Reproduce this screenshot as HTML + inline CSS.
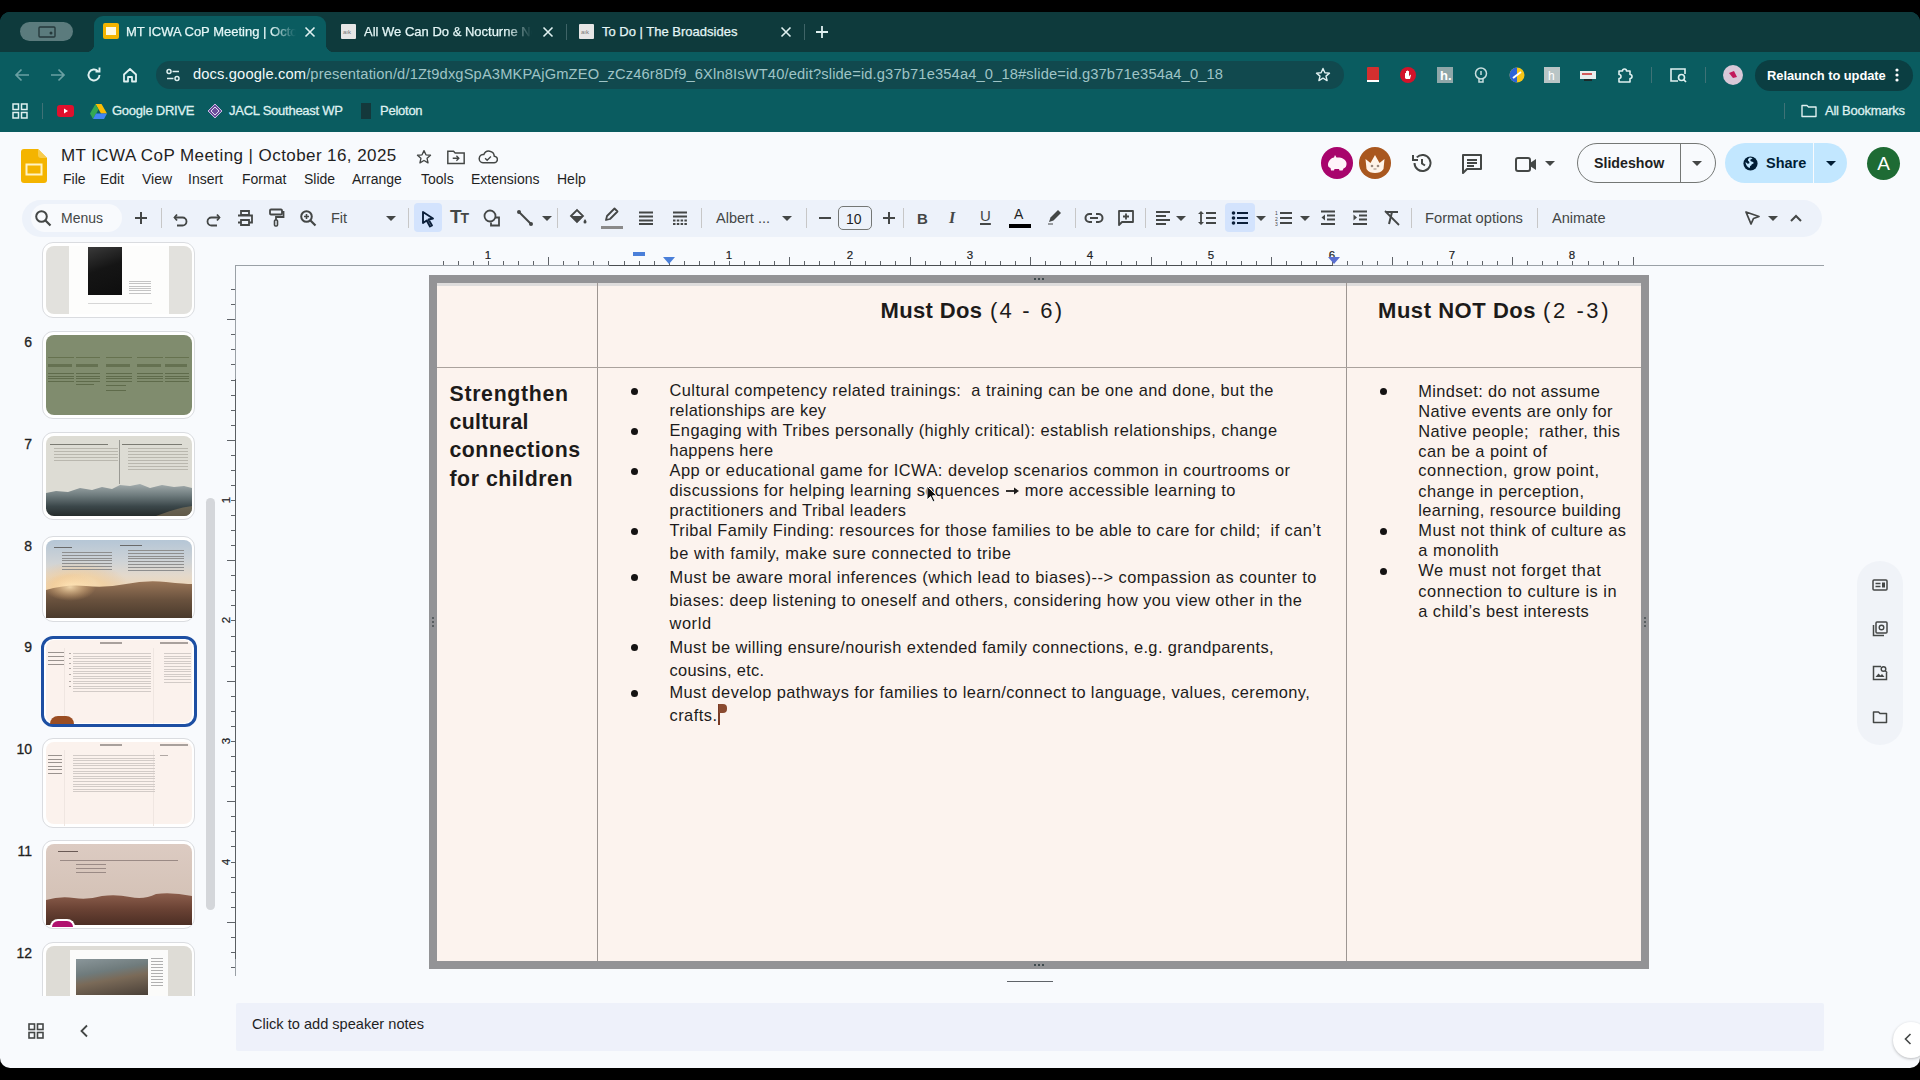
<!DOCTYPE html>
<html><head><meta charset="utf-8">
<style>
*{box-sizing:border-box;margin:0;padding:0}
html,body{width:1920px;height:1080px;overflow:hidden;background:#000;font-family:"Liberation Sans",sans-serif}
.a{position:absolute}
#chrome{position:absolute;left:0;top:12px;width:1920px;height:120px;background:#0f5a60;border-radius:10px 10px 0 0;overflow:hidden}
#tabstrip{position:absolute;left:0;top:0;width:1920px;height:40px;background:#0c3d41}
.tab{position:absolute;top:4px;height:36px;color:#e6f2f2;font-size:13px}
.tabtitle{position:absolute;top:12px;white-space:nowrap;overflow:hidden}
.fav{position:absolute;top:12px;width:16px;height:16px}
.x{position:absolute;top:8px;font-size:16px;color:#dfeeee}
#app{position:absolute;left:0;top:132px;width:1920px;height:936px;background:#f8fafd;border-radius:0 0 10px 10px;overflow:hidden}
.menu{position:absolute;top:39px;font-size:14px;color:#1f1f1f}
.ic{position:absolute}
svg{display:block}
.sl{white-space:nowrap;color:#1d1b1a}
</style></head><body>
<div id="chrome">
<div class="a" style="left:0px;top:0px;width:1920px;height:40px;background:#0e3a3c"></div>
<div class="a" style="left:94px;top:4px;width:232px;height:40px;background:#0a5c60;border-radius:9px 9px 0 0"></div>
<div class="a" style="left:86px;top:32px;width:8px;height:8px;background:radial-gradient(circle at 0 0,#0e3a3c 8px,#0a5c60 8.5px)"></div>
<div class="a" style="left:326px;top:32px;width:8px;height:8px;background:radial-gradient(circle at 100% 0,#0e3a3c 8px,#0a5c60 8.5px)"></div>
<div class="a" style="left:20px;top:10px;width:53px;height:19px;background:#5b7b7d;border-radius:10px"></div>
<svg class="a" style="left:38.0px;top:14.0px" width="18" height="12" viewBox="0 0 18 12"><rect x="1" y="1" width="16" height="10" rx="1" fill="none" stroke="#26393b" stroke-width="1.4"/><circle cx="13" cy="7" r="1.5" fill="#26393b"/></svg>
<svg class="a" style="left:103.0px;top:11.0px" width="16" height="16" viewBox="0 0 16 16"><rect x="0" y="0" width="16" height="16" rx="2" fill="#f4b400"/><rect x="3" y="4" width="10" height="8" fill="#fff8e0"/></svg>
<div class="a" style="left:126px;top:12px;white-space:nowrap;font-size:13px;color:#e4f6f6;-webkit-text-stroke:0.25px #e4f6f6;width:170px;overflow:hidden;-webkit-mask-image:linear-gradient(90deg,#000 85%,transparent)">MT ICWA CoP Meeting | October</div>
<svg class="a" style="left:304.0px;top:14.0px" width="12" height="12" viewBox="0 0 12 12"><path d="M1.5 1.5l9 9M10.5 1.5l-9 9" stroke="#dff0f0" stroke-width="1.6"/></svg>
<svg class="a" style="left:340.5px;top:11.5px" width="15" height="15" viewBox="0 0 15 15"><rect width="15" height="15" rx="1" fill="#e6e6e6"/><text x="2" y="10" font-size="6" fill="#777">aık</text></svg>
<div class="a" style="left:364px;top:12px;white-space:nowrap;font-size:13px;color:#e4f6f6;-webkit-text-stroke:0.25px #e4f6f6;width:168px;overflow:hidden;-webkit-mask-image:linear-gradient(90deg,#000 85%,transparent)">All We Can Do &amp; Nocturne Notes</div>
<svg class="a" style="left:542.0px;top:14.0px" width="12" height="12" viewBox="0 0 12 12"><path d="M1.5 1.5l9 9M10.5 1.5l-9 9" stroke="#dff0f0" stroke-width="1.6"/></svg>
<div class="a" style="left:566px;top:12px;width:1px;height:16px;background:#3f6467"></div>
<svg class="a" style="left:578.5px;top:11.5px" width="15" height="15" viewBox="0 0 15 15"><rect width="15" height="15" rx="1" fill="#e6e6e6"/><text x="2" y="10" font-size="6" fill="#777">aık</text></svg>
<div class="a" style="left:602px;top:12px;white-space:nowrap;font-size:13px;color:#e4f6f6;-webkit-text-stroke:0.25px #e4f6f6">To Do | The Broadsides</div>
<svg class="a" style="left:780.0px;top:14.0px" width="12" height="12" viewBox="0 0 12 12"><path d="M1.5 1.5l9 9M10.5 1.5l-9 9" stroke="#dff0f0" stroke-width="1.6"/></svg>
<div class="a" style="left:804px;top:12px;width:1px;height:16px;background:#3f6467"></div>
<svg class="a" style="left:815.0px;top:13.0px" width="14" height="14" viewBox="0 0 14 14"><path d="M7 1v12M1 7h12" stroke="#dff0f0" stroke-width="1.8"/></svg>
<div class="a" style="left:0px;top:40px;width:1920px;height:80px;background:#0a5c60"></div>
<svg class="a" style="left:14.0px;top:56.0px" width="16" height="14" viewBox="0 0 16 14"><path d="M15 7H2M7.5 1.5L2 7l5.5 5.5" fill="none" stroke="#6aa0a3" stroke-width="1.7"/></svg>
<svg class="a" style="left:50.0px;top:56.0px" width="16" height="14" viewBox="0 0 16 14"><path d="M1 7h13M8.5 1.5L14 7l-5.5 5.5" fill="none" stroke="#6aa0a3" stroke-width="1.7"/></svg>
<svg class="a" style="left:86.0px;top:55.0px" width="16" height="16" viewBox="0 0 16 16"><path d="M13.5 8a5.5 5.5 0 1 1-1.6-3.9" fill="none" stroke="#dff0f0" stroke-width="1.9"/><path d="M9.5 4.5h4v-4" fill="none" stroke="#dff0f0" stroke-width="1.9"/></svg>
<svg class="a" style="left:122.0px;top:55.0px" width="16" height="16" viewBox="0 0 16 16"><path d="M2 7.5L8 2l6 5.5V14.5h-4v-4.5H6v4.5H2z" fill="none" stroke="#dff0f0" stroke-width="1.8" stroke-linejoin="round"/></svg>
<div class="a" style="left:156px;top:49px;width:1188px;height:28px;background:#11494e;border-radius:14px"></div>
<svg class="a" style="left:165.0px;top:56.0px" width="16" height="14" viewBox="0 0 16 14"><circle cx="4" cy="3.5" r="2" fill="none" stroke="#dff0f0" stroke-width="1.5"/><path d="M7.5 3.5h6.5M2 10.5h6.5" stroke="#dff0f0" stroke-width="1.6"/><circle cx="12" cy="10.5" r="2" fill="none" stroke="#dff0f0" stroke-width="1.5"/></svg>
<div class="a" style="left:193px;top:54px;white-space:nowrap;font-size:14.7px;color:#f2fafa;letter-spacing:0.14px;top:54px">docs.google.com<span style="color:#9fc4c6;font-weight:normal">/presentation/d/1Zt9dxgSpA3MKPAjGmZEO_zCz46r8Df9_6Xln8IsWT40/edit?slide=id.g37b71e354a4_0_18#slide=id.g37b71e354a4_0_18</span></div>
<svg class="a" style="left:1315.0px;top:55.0px" width="16" height="16" viewBox="0 0 16 16"><path d="M8 1.5l1.9 4.2 4.6.4-3.5 3 1.1 4.5L8 11.2l-4.1 2.4 1.1-4.5-3.5-3 4.6-.4z" fill="none" stroke="#dff0f0" stroke-width="1.4" stroke-linejoin="round"/></svg>
<svg class="a" style="left:1366.0px;top:55.0px" width="14" height="16" viewBox="0 0 14 16"><rect x="1" y="0" width="12" height="14" rx="1" fill="#d32f2f"/><rect x="1" y="13" width="12" height="2" fill="#fff"/></svg>
<svg class="a" style="left:1400.0px;top:55.0px" width="16" height="16" viewBox="0 0 16 16"><circle cx="8" cy="8" r="8" fill="#d3132a"/><path d="M5 11V6.5c0-.6 1-.6 1 0V9V4.5c0-.6 1-.6 1 0V8V4c0-.6 1-.6 1 0v4V4.5c0-.6 1-.6 1 0v5l1-1.5c.4-.5 1.2 0 .9.5L10 12H6z" fill="#fff"/></svg>
<svg class="a" style="left:1437.0px;top:55.0px" width="16" height="16" viewBox="0 0 16 16"><rect width="16" height="16" fill="#8fa7a9"/><text x="3" y="13" font-size="13" font-weight="bold" fill="#fff" font-family="Liberation Sans">h.</text></svg>
<svg class="a" style="left:1474.0px;top:54.5px" width="14" height="17" viewBox="0 0 14 17"><circle cx="7" cy="6.5" r="5.5" fill="none" stroke="#c9dede" stroke-width="1.5"/><path d="M5 12v3h4v-3" fill="none" stroke="#c9dede" stroke-width="1.5"/><path d="M7 4v4" stroke="#c9dede" stroke-width="1.5"/></svg>
<svg class="a" style="left:1509.0px;top:55.0px" width="16" height="16" viewBox="0 0 16 16"><circle cx="8" cy="8" r="7.5" fill="#f5c518"/><path d="M8 .5A7.5 7.5 0 0 0 8 15.5z" fill="#2b63d9"/><path d="M4 11l8-6" stroke="#fff" stroke-width="2"/></svg>
<svg class="a" style="left:1544.0px;top:55.0px" width="16" height="16" viewBox="0 0 16 16"><rect width="16" height="16" fill="#b9c5c6"/><text x="4" y="13" font-size="12" fill="#fff" font-family="Liberation Sans">h</text></svg>
<svg class="a" style="left:1580.0px;top:56.0px" width="16" height="14" viewBox="0 0 16 14"><rect x="0" y="3" width="16" height="8" fill="#e8eeee"/><rect x="2" y="5" width="10" height="2" fill="#d35c5c"/><rect x="4" y="11" width="8" height="2" fill="#1a2a2a"/></svg>
<svg class="a" style="left:1617.0px;top:55.0px" width="16" height="16" viewBox="0 0 16 16"><path d="M2 4h3.5a2 2 0 0 1 4 0H13v3.5a2 2 0 0 1 0 4V15H2V11.5a2 2 0 0 0 0-4z" fill="none" stroke="#dff0f0" stroke-width="1.6" stroke-linejoin="round"/></svg>
<div class="a" style="left:1651px;top:55px;width:1px;height:16px;background:#3f7276"></div>
<svg class="a" style="left:1669.0px;top:55.0px" width="18" height="16" viewBox="0 0 18 16"><path d="M9 14H2V2h14v5" fill="none" stroke="#dff0f0" stroke-width="1.6"/><circle cx="12.5" cy="10.5" r="3" fill="none" stroke="#dff0f0" stroke-width="1.6"/><path d="M14.5 12.5l2.5 2.5" stroke="#dff0f0" stroke-width="1.7"/></svg>
<div class="a" style="left:1705px;top:55px;width:1px;height:16px;background:#3f7276"></div>
<svg class="a" style="left:1723.0px;top:53.0px" width="20" height="20" viewBox="0 0 20 20"><circle cx="10" cy="10" r="10" fill="#d8c8d8"/><path d="M6 8l5-2 3 6-4 1z" fill="#c2185b"/></svg>
<div class="a" style="left:1755px;top:48px;width:158px;height:31px;background:#0b3e42;border-radius:16px"></div>
<div class="a" style="left:1767px;top:56px;white-space:nowrap;font-size:12.9px;color:#ffffff;font-weight:bold;letter-spacing:-0.05px">Relaunch to update</div>
<svg class="a" style="left:1895.0px;top:56.0px" width="4" height="14" viewBox="0 0 4 14"><circle cx="2" cy="2" r="1.6" fill="#fff"/><circle cx="2" cy="7" r="1.6" fill="#fff"/><circle cx="2" cy="12" r="1.6" fill="#fff"/></svg>
<svg class="a" style="left:12.0px;top:91.0px" width="16" height="16" viewBox="0 0 16 16"><rect x="1" y="1" width="5.5" height="5.5" fill="none" stroke="#dff0f0" stroke-width="1.5"/><rect x="9.5" y="1" width="5.5" height="5.5" fill="none" stroke="#dff0f0" stroke-width="1.5"/><rect x="1" y="9.5" width="5.5" height="5.5" fill="none" stroke="#dff0f0" stroke-width="1.5"/><rect x="9.5" y="9.5" width="5.5" height="5.5" fill="none" stroke="#dff0f0" stroke-width="1.5"/></svg>
<div class="a" style="left:42px;top:91px;width:1px;height:16px;background:#3f7276"></div>
<svg class="a" style="left:56.5px;top:93.0px" width="17" height="12" viewBox="0 0 17 12"><rect width="17" height="12" rx="3" fill="#e0102d"/><path d="M7 3.5v5l4-2.5z" fill="#fff"/></svg>
<svg class="a" style="left:89.5px;top:91.5px" width="17" height="15" viewBox="0 0 17 15"><path d="M5.5 0h6l5.5 9.5h-6z" fill="#fbbc04"/><path d="M5.5 0L0 9.5l3 5.5 5.5-9.5z" fill="#34a853"/><path d="M3 15h11l3-5.5H6z" fill="#4285f4"/></svg>
<div class="a" style="left:112px;top:91px;white-space:nowrap;font-size:13px;color:#dff0f0;letter-spacing:-0.25px;-webkit-text-stroke:0.3px #dff0f0">Google DRIVE</div>
<svg class="a" style="left:207.0px;top:91.0px" width="16" height="16" viewBox="0 0 16 16"><path d="M8 1l7 7-7 7-7-7z" fill="#6b4f9a" stroke="#c7b8e0" stroke-width="1"/><path d="M8 4l4 4-4 4-4-4z" fill="none" stroke="#e0d8f0" stroke-width="1"/></svg>
<div class="a" style="left:229px;top:91px;white-space:nowrap;font-size:13px;color:#dff0f0;letter-spacing:-0.25px;-webkit-text-stroke:0.3px #dff0f0">JACL Southeast WP</div>
<svg class="a" style="left:361.0px;top:91.0px" width="10" height="16" viewBox="0 0 10 16"><rect width="10" height="16" fill="#14383b"/></svg>
<div class="a" style="left:380px;top:91px;white-space:nowrap;font-size:13px;color:#dff0f0;letter-spacing:-0.25px;-webkit-text-stroke:0.3px #dff0f0">Peloton</div>
<div class="a" style="left:1784px;top:91px;width:1px;height:16px;background:#3f7276"></div>
<svg class="a" style="left:1801.0px;top:92.0px" width="16" height="14" viewBox="0 0 16 14"><path d="M1 1.5h5l1.5 1.5H15v9.5H1z" fill="none" stroke="#dff0f0" stroke-width="1.4" stroke-linejoin="round"/></svg>
<div class="a" style="left:1825px;top:91px;white-space:nowrap;font-size:13px;color:#dff0f0;letter-spacing:-0.25px;-webkit-text-stroke:0.3px #dff0f0">All Bookmarks</div>
</div>

<div id="app">
  <!-- header -->
  <svg class="a" style="left:21px;top:17px" width="26" height="34" viewBox="0 0 26 34">
    <path d="M3 0H17L26 9V31A3 3 0 0 1 23 34H3A3 3 0 0 1 0 31V3A3 3 0 0 1 3 0Z" fill="#f4b400"/>
    <path d="M17 0L26 9H20A3 3 0 0 1 17 6Z" fill="#f7cb4d"/>
    <rect x="5.5" y="15.5" width="15" height="10" fill="none" stroke="#fff3c4" stroke-width="2"/>
  </svg>
  <div class="a" style="left:61px;top:14px;font-size:17px;letter-spacing:0.42px;color:#1f1f1f;white-space:nowrap">MT ICWA CoP Meeting | October 16, 2025</div>
  <svg class="a" style="left:415px;top:16px" width="18" height="18" viewBox="0 0 24 24"><path d="M12 3.5l2.6 5.6 6.1.6-4.6 4.1 1.3 6-5.4-3.1-5.4 3.1 1.3-6-4.6-4.1 6.1-.6z" fill="none" stroke="#444746" stroke-width="1.8" stroke-linejoin="round"/></svg>
  <svg class="a" style="left:446px;top:16px" width="20" height="18" viewBox="0 0 24 22"><path d="M2 4h7l2 2h11v13H2z" fill="none" stroke="#444746" stroke-width="1.8"/><path d="M8 12.5h7M12.5 9.5l3 3-3 3" fill="none" stroke="#444746" stroke-width="1.6"/></svg>
  <svg class="a" style="left:478px;top:17px" width="20" height="16" viewBox="0 0 24 18"><path d="M6 16h13a4 4 0 0 0 .5-8A6.5 6.5 0 0 0 7 6a5 5 0 0 0-1 10z" fill="none" stroke="#444746" stroke-width="1.8"/><path d="M8.5 10.5l2.5 2.5 4.5-4.5" fill="none" stroke="#444746" stroke-width="1.6"/></svg>
  <div class="menu" style="left:63px">File</div>
  <div class="menu" style="left:100px">Edit</div>
  <div class="menu" style="left:142px">View</div>
  <div class="menu" style="left:188px">Insert</div>
  <div class="menu" style="left:242px">Format</div>
  <div class="menu" style="left:304px">Slide</div>
  <div class="menu" style="left:352px">Arrange</div>
  <div class="menu" style="left:421px">Tools</div>
  <div class="menu" style="left:471px">Extensions</div>
  <div class="menu" style="left:557px">Help</div>

  <!-- header right -->
  <div class="a" style="left:1321px;top:15px;width:32px;height:32px;border-radius:50%;background:#a8046c"></div>
  <svg class="a" style="left:1325px;top:22px" width="24" height="18" viewBox="0 0 24 18"><path d="M3 11c0-4 3-7 6-7.5L10 1l1.5 2.5C16 3 21 5 21.5 9c.3 3-1 5-3 5.5l-1 2h-3l-.5-1.5H9.5L9 16.5H6L5.5 14C4 13.5 3 12.5 3 11z" fill="#fff3fa"/></svg>
  <div class="a" style="left:1359px;top:15px;width:32px;height:32px;border-radius:50%;background:#a9571f"></div>
  <svg class="a" style="left:1363px;top:19px" width="24" height="24" viewBox="0 0 24 24"><path d="M2.5 8l5 4 4.5-8 4.5 8 5-4-1 10c-2 3-5 4-8.5 4s-6.5-1-8.5-4z" fill="#fff4ea"/><circle cx="9" cy="15" r="1.3" fill="#9a8a80"/><circle cx="15" cy="15" r="1.3" fill="#9a8a80"/><path d="M10.5 18h3" stroke="#9a8a80" stroke-width="1"/></svg>
  <svg class="a" style="left:1410px;top:19px" width="24" height="24" viewBox="0 0 24 24"><path d="M4.5 12a8 8 0 1 0 2.3-5.6" fill="none" stroke="#444746" stroke-width="2"/><path d="M3 4v5h5" fill="none" stroke="#444746" stroke-width="2"/><path d="M12 8v4.5l3 2" fill="none" stroke="#444746" stroke-width="2"/></svg>
  <svg class="a" style="left:1460px;top:20px" width="24" height="24" viewBox="0 0 24 24"><path d="M3 3h18v14H7l-4 4z" fill="none" stroke="#444746" stroke-width="2" stroke-linejoin="round"/><path d="M7 8h10M7 11h10M7 14h7" stroke="#444746" stroke-width="1.8"/></svg>
  <svg class="a" style="left:1514px;top:22px" width="24" height="20" viewBox="0 0 24 20"><rect x="2" y="4" width="14" height="13" rx="2" fill="none" stroke="#444746" stroke-width="2"/><path d="M16 9l6-4v11l-6-4z" fill="#444746"/></svg>
  <div class="a" style="left:1545px;top:29px;border-left:5px solid transparent;border-right:5px solid transparent;border-top:5px solid #444746"></div>
  <div class="a" style="left:1577px;top:11px;width:139px;height:40px;border:1px solid #747775;border-radius:20px"></div>
  <div class="a" style="left:1680px;top:12px;width:1px;height:38px;background:#747775"></div>
  <div class="a" style="left:1594px;top:23px;font-size:14.2px;font-weight:bold;color:#1f1f1f">Slideshow</div>
  <div class="a" style="left:1692px;top:29px;border-left:5px solid transparent;border-right:5px solid transparent;border-top:5px solid #444746"></div>
  <div class="a" style="left:1725px;top:11px;width:122px;height:40px;border-radius:20px;background:#c2e7ff"></div>
  <div class="a" style="left:1813px;top:11px;width:1px;height:40px;background:#f8fafd"></div>
  <svg class="a" style="left:1742px;top:23px" width="17" height="17" viewBox="0 0 24 24"><circle cx="12" cy="12" r="10" fill="#001d35"/><path d="M11 3.5c-2 1-3 3-2.5 4.5 1 .5 2 1.5 2 3s-2 1.5-3 1l-2.5-2c0 4 2.5 7.5 6 8.5l.5-3c1 0 2-1 2-2l3-2c0-1.5-1.5-2-3-2.5-1.5 0-2-1-1.5-2.5 1-1 2-1 3-1.5-1-1-2.5-1.5-4-1.5z" fill="#c2e7ff"/></svg>
  <div class="a" style="left:1766px;top:23px;font-size:14.5px;font-weight:bold;color:#001d35">Share</div>
  <div class="a" style="left:1826px;top:29px;border-left:5px solid transparent;border-right:5px solid transparent;border-top:5px solid #001d35"></div>
  <div class="a" style="left:1867px;top:15px;width:33px;height:33px;border-radius:50%;background:#1e6b34;color:#fff;font-size:19px;text-align:center;line-height:33px">A</div>

  <!-- toolbar pill -->
  <div class="a" style="left:22px;top:68px;width:1800px;height:37px;border-radius:19px;background:#edf2fa"></div>
  <div id="tb"><div class="a" style="left:31px;top:72px;width:91px;height:28px;background:#f8fafd;border-radius:14px"></div>
<svg class="a" style="left:34.0px;top:77.0px" width="18" height="18" viewBox="0 0 18 18"><circle cx="7.5" cy="7.5" r="5.3" fill="none" stroke="#444746" stroke-width="2"/><path d="M11.5 11.5L16.5 16.5" stroke="#444746" stroke-width="2.2"/></svg>
<div class="a" style="left:61px;top:78px;white-space:nowrap;font-size:14px;color:#444746">Menus</div>
<svg class="a" style="left:134.0px;top:79.0px" width="14" height="14" viewBox="0 0 14 14"><path d="M7 1v12M1 7h12" stroke="#444746" stroke-width="2"/></svg>
<div class="a" style="left:161px;top:76px;width:1px;height:20px;background:#c7c7c7"></div>
<svg class="a" style="left:172.0px;top:78.0px" width="18" height="18" viewBox="0 0 18 18"><path d="M5 4.5L2.5 7.5 5 10.5" fill="none" stroke="#444746" stroke-width="1.8"/><path d="M3 7.5h7.5a4 4 0 0 1 0 8H5" fill="none" stroke="#444746" stroke-width="1.8"/></svg>
<svg class="a" style="left:204.0px;top:78.0px" width="18" height="18" viewBox="0 0 18 18"><path d="M13 4.5L15.5 7.5 13 10.5" fill="none" stroke="#444746" stroke-width="1.8"/><path d="M15 7.5H7.5a4 4 0 0 0 0 8H13" fill="none" stroke="#444746" stroke-width="1.8"/></svg>
<svg class="a" style="left:236.0px;top:77.0px" width="18" height="18" viewBox="0 0 18 18"><path d="M5 2h8v4H5z" fill="none" stroke="#444746" stroke-width="1.8"/><path d="M2 6.5h14v7h-3M5 13.5H2z" fill="none" stroke="#444746" stroke-width="1.8"/><path d="M5 11h8v5H5z" fill="none" stroke="#444746" stroke-width="1.8"/></svg>
<svg class="a" style="left:267.0px;top:76.0px" width="18" height="20" viewBox="0 0 18 20"><rect x="3" y="1.5" width="12" height="5" rx="1" fill="none" stroke="#444746" stroke-width="1.8"/><path d="M15 4h1.5v5H9v3" fill="none" stroke="#444746" stroke-width="1.8"/><rect x="7.5" y="12" width="3" height="6" rx="1" fill="none" stroke="#444746" stroke-width="1.6"/></svg>
<svg class="a" style="left:299.0px;top:77.0px" width="18" height="18" viewBox="0 0 18 18"><circle cx="7.5" cy="7.5" r="5.3" fill="none" stroke="#444746" stroke-width="2"/><path d="M11.5 11.5L16.5 16.5" stroke="#444746" stroke-width="2.2"/><path d="M7.5 5v5M5 7.5h5" stroke="#444746" stroke-width="1.6"/></svg>
<div class="a" style="left:331px;top:78px;white-space:nowrap;font-size:14.5px;color:#444746">Fit</div>
<div class="a" style="left:386px;top:84px;border-left:5px solid transparent;border-right:5px solid transparent;border-top:5px solid #444746"></div>
<div class="a" style="left:408px;top:76px;width:1px;height:20px;background:#c7c7c7"></div>
<div class="a" style="left:414px;top:71px;width:28px;height:29px;background:#d3e3fd;border-radius:4px"></div>
<svg class="a" style="left:420.0px;top:78.0px" width="16" height="18" viewBox="0 0 16 18"><path d="M3 2l10 6.5-4.5 1L12 15.5l-2 1-3.3-6L3 13z" fill="none" stroke="#0b1f3a" stroke-width="1.9" stroke-linejoin="round"/></svg>
<div class="a" style="left:450px;top:75px;white-space:nowrap;color:#444746;font-weight:bold;line-height:20px"><span style="font-size:19px;font-weight:bold;letter-spacing:-1px">T</span><span style="font-size:14px;font-weight:bold">T</span></div>
<svg class="a" style="left:482.0px;top:76.0px" width="20" height="20" viewBox="0 0 20 20"><circle cx="8" cy="8" r="5.5" fill="none" stroke="#444746" stroke-width="1.8"/><path d="M13 9.5h4v8h-8v-3" fill="none" stroke="#444746" stroke-width="1.8"/></svg>
<svg class="a" style="left:516.0px;top:77.0px" width="18" height="18" viewBox="0 0 18 18"><path d="M3 3l12 12" stroke="#444746" stroke-width="2"/><circle cx="3" cy="3" r="2" fill="#444746"/><circle cx="15" cy="15" r="2" fill="#444746"/></svg>
<div class="a" style="left:542px;top:84px;border-left:5px solid transparent;border-right:5px solid transparent;border-top:5px solid #444746"></div>
<div class="a" style="left:557px;top:76px;width:1px;height:20px;background:#c7c7c7"></div>
<svg class="a" style="left:568.0px;top:76.0px" width="20" height="18" viewBox="0 0 20 18"><path d="M3 8l6-6 6 6-6 6z" fill="none" stroke="#444746" stroke-width="1.8"/><path d="M3 8h12l-6 6z" fill="#444746"/><path d="M17 11c1 1.5 1.5 2.3 1.5 3a1.5 1.5 0 0 1-3 0c0-.7.5-1.5 1.5-3z" fill="#444746"/></svg>
<svg class="a" style="left:603.0px;top:75.0px" width="18" height="16" viewBox="0 0 18 16"><path d="M3 13l1-4 7.5-7.5 3 3L7 12z" fill="none" stroke="#444746" stroke-width="1.8" stroke-linejoin="round"/></svg>
<div class="a" style="left:601px;top:94px;width:22px;height:3px;background:#8a8a8a"></div>
<svg class="a" style="left:637.0px;top:78.0px" width="18" height="16" viewBox="0 0 18 16"><path d="M2 2.5h14M2 6.5h14M2 10.5h14M2 14h14" stroke="#444746" stroke-width="2.2"/></svg>
<svg class="a" style="left:671.0px;top:78.0px" width="18" height="16" viewBox="0 0 18 16"><path d="M2 2.5h14M2 6.5h14" stroke="#444746" stroke-width="2.2"/><path d="M2 10.5h14M2 14h14" stroke="#444746" stroke-width="1.8" stroke-dasharray="2.5 1.3"/></svg>
<div class="a" style="left:701px;top:76px;width:1px;height:20px;background:#c7c7c7"></div>
<div class="a" style="left:716px;top:78px;white-space:nowrap;font-size:14.5px;color:#444746">Albert ...</div>
<div class="a" style="left:782px;top:84px;border-left:5px solid transparent;border-right:5px solid transparent;border-top:5px solid #444746"></div>
<div class="a" style="left:806px;top:76px;width:1px;height:20px;background:#c7c7c7"></div>
<svg class="a" style="left:818.0px;top:79.0px" width="14" height="14" viewBox="0 0 14 14"><path d="M1 7h12" stroke="#444746" stroke-width="2"/></svg>
<div class="a" style="left:838px;top:74px;width:34px;height:24px;border:1px solid #747775;border-radius:5px"></div>
<div class="a" style="left:846px;top:79px;white-space:nowrap;font-size:14px;color:#1f1f1f">10</div>
<svg class="a" style="left:882.0px;top:79.0px" width="14" height="14" viewBox="0 0 14 14"><path d="M7 1v12M1 7h12" stroke="#444746" stroke-width="2"/></svg>
<div class="a" style="left:903px;top:76px;width:1px;height:20px;background:#c7c7c7"></div>
<div class="a" style="left:917px;top:78px;white-space:nowrap;font-size:15px;font-weight:bold;color:#444746">B</div>
<div class="a" style="left:949px;top:77px;white-space:nowrap;font-size:16px;font-weight:bold;color:#444746;font-family:'Liberation Serif'"><i>I</i></div>
<div class="a" style="left:980px;top:75px;white-space:nowrap;font-size:15px;color:#444746"><u style="text-decoration-thickness:1.5px;text-underline-offset:2px">U</u></div>
<div class="a" style="left:1014px;top:74px;white-space:nowrap;font-size:14px;color:#1f1f1f">A</div>
<div class="a" style="left:1009px;top:92px;width:22px;height:4px;background:#000"></div>
<svg class="a" style="left:1046.0px;top:75.0px" width="18" height="18" viewBox="0 0 18 18"><path d="M3 15l1.5-4.5L12 3l3 3-7.5 7.5z" fill="#444746"/><path d="M2 17h5" stroke="#444746" stroke-width="1"/></svg>
<div class="a" style="left:1075px;top:76px;width:1px;height:20px;background:#c7c7c7"></div>
<svg class="a" style="left:1084.0px;top:80.0px" width="20" height="12" viewBox="0 0 20 12"><path d="M8 2H5.5a4 4 0 0 0 0 8H8M12 2h2.5a4 4 0 0 1 0 8H12M6 6h8" fill="none" stroke="#444746" stroke-width="2"/></svg>
<svg class="a" style="left:1117.0px;top:77.0px" width="18" height="18" viewBox="0 0 18 18"><path d="M2 2h14v11H5l-3 3z" fill="none" stroke="#444746" stroke-width="1.8" stroke-linejoin="round"/><path d="M9 4.5v6M6 7.5h6" stroke="#444746" stroke-width="1.8"/></svg>
<div class="a" style="left:1145px;top:76px;width:1px;height:20px;background:#c7c7c7"></div>
<svg class="a" style="left:1155.0px;top:78.0px" width="16" height="16" viewBox="0 0 16 16"><path d="M1 2h14M1 6h10M1 10h14M1 14h10" stroke="#444746" stroke-width="1.9"/></svg>
<div class="a" style="left:1176px;top:84px;border-left:5px solid transparent;border-right:5px solid transparent;border-top:5px solid #444746"></div>
<svg class="a" style="left:1197.0px;top:78.0px" width="20" height="16" viewBox="0 0 20 16"><path d="M4 3v10" stroke="#444746" stroke-width="1.8"/><path d="M1 4l3-3 3 3M1 12l3 3 3-3" fill="#444746"/><path d="M9 3h10M9 8h10M9 13h10" stroke="#444746" stroke-width="1.9"/></svg>
<div class="a" style="left:1225px;top:71px;width:30px;height:29px;background:#d3e3fd;border-radius:4px"></div>
<svg class="a" style="left:1231.0px;top:78.0px" width="18" height="16" viewBox="0 0 18 16"><circle cx="2.5" cy="3" r="1.8" fill="#0b1f3a"/><circle cx="2.5" cy="8" r="1.8" fill="#0b1f3a"/><circle cx="2.5" cy="13" r="1.8" fill="#0b1f3a"/><path d="M6 3h11M6 8h11M6 13h11" stroke="#0b1f3a" stroke-width="1.9"/></svg>
<div class="a" style="left:1256px;top:84px;border-left:5px solid transparent;border-right:5px solid transparent;border-top:5px solid #444746"></div>
<svg class="a" style="left:1275.0px;top:78.0px" width="18" height="16" viewBox="0 0 18 16"><text x="0" y="5" font-size="5" fill="#444746">1</text><text x="0" y="10.5" font-size="5" fill="#444746">2</text><text x="0" y="16" font-size="5" fill="#444746">3</text><path d="M5 3h12M5 8h12M5 13h12" stroke="#444746" stroke-width="1.9"/></svg>
<div class="a" style="left:1300px;top:84px;border-left:5px solid transparent;border-right:5px solid transparent;border-top:5px solid #444746"></div>
<svg class="a" style="left:1320.0px;top:78.0px" width="16" height="16" viewBox="0 0 16 16"><path d="M1 1.5h14M7 5.5h8M7 9.5h8M1 14h14" stroke="#444746" stroke-width="1.8"/><path d="M5 4.5v6L1.5 7.5z" fill="#444746"/></svg>
<svg class="a" style="left:1352.0px;top:78.0px" width="16" height="16" viewBox="0 0 16 16"><path d="M1 1.5h14M7 5.5h8M7 9.5h8M1 14h14" stroke="#444746" stroke-width="1.8"/><path d="M1.5 4.5v6L5 7.5z" fill="#444746"/></svg>
<svg class="a" style="left:1383.0px;top:77.0px" width="18" height="18" viewBox="0 0 18 18"><path d="M3 3h12M9 3L6 15" stroke="#444746" stroke-width="2"/><path d="M2 2l14 14" stroke="#444746" stroke-width="1.8"/></svg>
<div class="a" style="left:1411px;top:76px;width:1px;height:20px;background:#c7c7c7"></div>
<div class="a" style="left:1425px;top:78px;white-space:nowrap;font-size:14.7px;color:#444746">Format options</div>
<div class="a" style="left:1537px;top:76px;width:1px;height:20px;background:#c7c7c7"></div>
<div class="a" style="left:1552px;top:78px;white-space:nowrap;font-size:14.6px;color:#444746">Animate</div>
<svg class="a" style="left:1743.0px;top:77.0px" width="18" height="18" viewBox="0 0 18 18"><path d="M3 3l13 4.5-5.5 2L8 15z" fill="none" stroke="#444746" stroke-width="1.8" stroke-linejoin="round"/></svg>
<div class="a" style="left:1768px;top:84px;border-left:5px solid transparent;border-right:5px solid transparent;border-top:5px solid #444746"></div>
<svg class="a" style="left:1789.0px;top:81.0px" width="14" height="10" viewBox="0 0 14 10"><path d="M2 8l5-5 5 5" fill="none" stroke="#444746" stroke-width="2"/></svg></div><!--tbend-->
<div id="bd"><div class="a" style="left:235px;top:133px;width:1589px;height:1px;background:#9aa0a6"></div>
<div class="a" style="left:609px;top:133px;width:724px;height:1px;background:#4a4e52"></div>
<div class="a" style="left:443px;top:129px;width:1px;height:4px;background:#5f6368"></div>
<div class="a" style="left:458px;top:129px;width:1px;height:4px;background:#5f6368"></div>
<div class="a" style="left:473px;top:129px;width:1px;height:4px;background:#5f6368"></div>
<div class="a" style="left:488px;top:129px;width:1px;height:4px;background:#5f6368"></div>
<div class="a" style="left:503px;top:129px;width:1px;height:4px;background:#5f6368"></div>
<div class="a" style="left:518px;top:129px;width:1px;height:4px;background:#5f6368"></div>
<div class="a" style="left:533px;top:129px;width:1px;height:4px;background:#5f6368"></div>
<div class="a" style="left:548px;top:125px;width:1px;height:8px;background:#5f6368"></div>
<div class="a" style="left:563px;top:129px;width:1px;height:4px;background:#5f6368"></div>
<div class="a" style="left:578px;top:129px;width:1px;height:4px;background:#5f6368"></div>
<div class="a" style="left:593px;top:129px;width:1px;height:4px;background:#5f6368"></div>
<div class="a" style="left:608px;top:129px;width:1px;height:4px;background:#5f6368"></div>
<div class="a" style="left:624px;top:129px;width:1px;height:4px;background:#5f6368"></div>
<div class="a" style="left:639px;top:129px;width:1px;height:4px;background:#5f6368"></div>
<div class="a" style="left:654px;top:129px;width:1px;height:4px;background:#5f6368"></div>
<div class="a" style="left:669px;top:125px;width:1px;height:8px;background:#5f6368"></div>
<div class="a" style="left:684px;top:129px;width:1px;height:4px;background:#5f6368"></div>
<div class="a" style="left:699px;top:129px;width:1px;height:4px;background:#5f6368"></div>
<div class="a" style="left:714px;top:129px;width:1px;height:4px;background:#5f6368"></div>
<div class="a" style="left:729px;top:129px;width:1px;height:4px;background:#5f6368"></div>
<div class="a" style="left:744px;top:129px;width:1px;height:4px;background:#5f6368"></div>
<div class="a" style="left:759px;top:129px;width:1px;height:4px;background:#5f6368"></div>
<div class="a" style="left:774px;top:129px;width:1px;height:4px;background:#5f6368"></div>
<div class="a" style="left:789px;top:125px;width:1px;height:8px;background:#5f6368"></div>
<div class="a" style="left:804px;top:129px;width:1px;height:4px;background:#5f6368"></div>
<div class="a" style="left:819px;top:129px;width:1px;height:4px;background:#5f6368"></div>
<div class="a" style="left:834px;top:129px;width:1px;height:4px;background:#5f6368"></div>
<div class="a" style="left:850px;top:129px;width:1px;height:4px;background:#5f6368"></div>
<div class="a" style="left:865px;top:129px;width:1px;height:4px;background:#5f6368"></div>
<div class="a" style="left:880px;top:129px;width:1px;height:4px;background:#5f6368"></div>
<div class="a" style="left:895px;top:129px;width:1px;height:4px;background:#5f6368"></div>
<div class="a" style="left:910px;top:125px;width:1px;height:8px;background:#5f6368"></div>
<div class="a" style="left:925px;top:129px;width:1px;height:4px;background:#5f6368"></div>
<div class="a" style="left:940px;top:129px;width:1px;height:4px;background:#5f6368"></div>
<div class="a" style="left:955px;top:129px;width:1px;height:4px;background:#5f6368"></div>
<div class="a" style="left:970px;top:129px;width:1px;height:4px;background:#5f6368"></div>
<div class="a" style="left:985px;top:129px;width:1px;height:4px;background:#5f6368"></div>
<div class="a" style="left:1000px;top:129px;width:1px;height:4px;background:#5f6368"></div>
<div class="a" style="left:1015px;top:129px;width:1px;height:4px;background:#5f6368"></div>
<div class="a" style="left:1030px;top:125px;width:1px;height:8px;background:#5f6368"></div>
<div class="a" style="left:1045px;top:129px;width:1px;height:4px;background:#5f6368"></div>
<div class="a" style="left:1060px;top:129px;width:1px;height:4px;background:#5f6368"></div>
<div class="a" style="left:1075px;top:129px;width:1px;height:4px;background:#5f6368"></div>
<div class="a" style="left:1090px;top:129px;width:1px;height:4px;background:#5f6368"></div>
<div class="a" style="left:1106px;top:129px;width:1px;height:4px;background:#5f6368"></div>
<div class="a" style="left:1121px;top:129px;width:1px;height:4px;background:#5f6368"></div>
<div class="a" style="left:1136px;top:129px;width:1px;height:4px;background:#5f6368"></div>
<div class="a" style="left:1151px;top:125px;width:1px;height:8px;background:#5f6368"></div>
<div class="a" style="left:1166px;top:129px;width:1px;height:4px;background:#5f6368"></div>
<div class="a" style="left:1181px;top:129px;width:1px;height:4px;background:#5f6368"></div>
<div class="a" style="left:1196px;top:129px;width:1px;height:4px;background:#5f6368"></div>
<div class="a" style="left:1211px;top:129px;width:1px;height:4px;background:#5f6368"></div>
<div class="a" style="left:1226px;top:129px;width:1px;height:4px;background:#5f6368"></div>
<div class="a" style="left:1241px;top:129px;width:1px;height:4px;background:#5f6368"></div>
<div class="a" style="left:1256px;top:129px;width:1px;height:4px;background:#5f6368"></div>
<div class="a" style="left:1271px;top:125px;width:1px;height:8px;background:#5f6368"></div>
<div class="a" style="left:1286px;top:129px;width:1px;height:4px;background:#5f6368"></div>
<div class="a" style="left:1301px;top:129px;width:1px;height:4px;background:#5f6368"></div>
<div class="a" style="left:1316px;top:129px;width:1px;height:4px;background:#5f6368"></div>
<div class="a" style="left:1332px;top:129px;width:1px;height:4px;background:#5f6368"></div>
<div class="a" style="left:1347px;top:129px;width:1px;height:4px;background:#5f6368"></div>
<div class="a" style="left:1362px;top:129px;width:1px;height:4px;background:#5f6368"></div>
<div class="a" style="left:1377px;top:129px;width:1px;height:4px;background:#5f6368"></div>
<div class="a" style="left:1392px;top:125px;width:1px;height:8px;background:#5f6368"></div>
<div class="a" style="left:1407px;top:129px;width:1px;height:4px;background:#5f6368"></div>
<div class="a" style="left:1422px;top:129px;width:1px;height:4px;background:#5f6368"></div>
<div class="a" style="left:1437px;top:129px;width:1px;height:4px;background:#5f6368"></div>
<div class="a" style="left:1452px;top:129px;width:1px;height:4px;background:#5f6368"></div>
<div class="a" style="left:1467px;top:129px;width:1px;height:4px;background:#5f6368"></div>
<div class="a" style="left:1482px;top:129px;width:1px;height:4px;background:#5f6368"></div>
<div class="a" style="left:1497px;top:129px;width:1px;height:4px;background:#5f6368"></div>
<div class="a" style="left:1512px;top:125px;width:1px;height:8px;background:#5f6368"></div>
<div class="a" style="left:1527px;top:129px;width:1px;height:4px;background:#5f6368"></div>
<div class="a" style="left:1542px;top:129px;width:1px;height:4px;background:#5f6368"></div>
<div class="a" style="left:1557px;top:129px;width:1px;height:4px;background:#5f6368"></div>
<div class="a" style="left:1572px;top:129px;width:1px;height:4px;background:#5f6368"></div>
<div class="a" style="left:1588px;top:129px;width:1px;height:4px;background:#5f6368"></div>
<div class="a" style="left:1603px;top:129px;width:1px;height:4px;background:#5f6368"></div>
<div class="a" style="left:1618px;top:129px;width:1px;height:4px;background:#5f6368"></div>
<div class="a" style="left:1633px;top:125px;width:1px;height:8px;background:#5f6368"></div>
<div class="a" style="left:484px;top:117px;white-space:nowrap;font-size:11.5px;color:#202124;width:8px;text-align:center;-webkit-text-stroke:0.2px #202124">1</div>
<div class="a" style="left:725px;top:117px;white-space:nowrap;font-size:11.5px;color:#202124;width:8px;text-align:center;-webkit-text-stroke:0.2px #202124">1</div>
<div class="a" style="left:846px;top:117px;white-space:nowrap;font-size:11.5px;color:#202124;width:8px;text-align:center;-webkit-text-stroke:0.2px #202124">2</div>
<div class="a" style="left:966px;top:117px;white-space:nowrap;font-size:11.5px;color:#202124;width:8px;text-align:center;-webkit-text-stroke:0.2px #202124">3</div>
<div class="a" style="left:1086px;top:117px;white-space:nowrap;font-size:11.5px;color:#202124;width:8px;text-align:center;-webkit-text-stroke:0.2px #202124">4</div>
<div class="a" style="left:1207px;top:117px;white-space:nowrap;font-size:11.5px;color:#202124;width:8px;text-align:center;-webkit-text-stroke:0.2px #202124">5</div>
<div class="a" style="left:1328px;top:117px;white-space:nowrap;font-size:11.5px;color:#202124;width:8px;text-align:center;-webkit-text-stroke:0.2px #202124">6</div>
<div class="a" style="left:1448px;top:117px;white-space:nowrap;font-size:11.5px;color:#202124;width:8px;text-align:center;-webkit-text-stroke:0.2px #202124">7</div>
<div class="a" style="left:1568px;top:117px;white-space:nowrap;font-size:11.5px;color:#202124;width:8px;text-align:center;-webkit-text-stroke:0.2px #202124">8</div>
<div class="a" style="left:633px;top:120px;width:12px;height:4px;background:#4a7fd9"></div>
<div class="a" style="left:663px;top:125px;border-left:6px solid transparent;border-right:6px solid transparent;border-top:7px solid #4a7fd9"></div>
<div class="a" style="left:1328px;top:125px;border-left:6px solid transparent;border-right:6px solid transparent;border-top:7px solid #5a6fd0"></div>
<div class="a" style="left:235px;top:133px;width:1px;height:711px;background:#9aa0a6"></div>
<div class="a" style="left:235px;top:247px;width:1px;height:580px;background:#5a5e62"></div>
<div class="a" style="left:231px;top:157px;width:4px;height:1px;background:#5f6368"></div>
<div class="a" style="left:231px;top:172px;width:4px;height:1px;background:#5f6368"></div>
<div class="a" style="left:227px;top:187px;width:8px;height:1px;background:#5f6368"></div>
<div class="a" style="left:231px;top:202px;width:4px;height:1px;background:#5f6368"></div>
<div class="a" style="left:231px;top:217px;width:4px;height:1px;background:#5f6368"></div>
<div class="a" style="left:231px;top:232px;width:4px;height:1px;background:#5f6368"></div>
<div class="a" style="left:231px;top:248px;width:4px;height:1px;background:#5f6368"></div>
<div class="a" style="left:231px;top:263px;width:4px;height:1px;background:#5f6368"></div>
<div class="a" style="left:231px;top:278px;width:4px;height:1px;background:#5f6368"></div>
<div class="a" style="left:231px;top:293px;width:4px;height:1px;background:#5f6368"></div>
<div class="a" style="left:227px;top:308px;width:8px;height:1px;background:#5f6368"></div>
<div class="a" style="left:231px;top:323px;width:4px;height:1px;background:#5f6368"></div>
<div class="a" style="left:231px;top:338px;width:4px;height:1px;background:#5f6368"></div>
<div class="a" style="left:231px;top:353px;width:4px;height:1px;background:#5f6368"></div>
<div class="a" style="left:231px;top:368px;width:4px;height:1px;background:#5f6368"></div>
<div class="a" style="left:231px;top:383px;width:4px;height:1px;background:#5f6368"></div>
<div class="a" style="left:231px;top:398px;width:4px;height:1px;background:#5f6368"></div>
<div class="a" style="left:231px;top:413px;width:4px;height:1px;background:#5f6368"></div>
<div class="a" style="left:227px;top:428px;width:8px;height:1px;background:#5f6368"></div>
<div class="a" style="left:231px;top:443px;width:4px;height:1px;background:#5f6368"></div>
<div class="a" style="left:231px;top:458px;width:4px;height:1px;background:#5f6368"></div>
<div class="a" style="left:231px;top:473px;width:4px;height:1px;background:#5f6368"></div>
<div class="a" style="left:231px;top:488px;width:4px;height:1px;background:#5f6368"></div>
<div class="a" style="left:231px;top:504px;width:4px;height:1px;background:#5f6368"></div>
<div class="a" style="left:231px;top:519px;width:4px;height:1px;background:#5f6368"></div>
<div class="a" style="left:231px;top:534px;width:4px;height:1px;background:#5f6368"></div>
<div class="a" style="left:227px;top:549px;width:8px;height:1px;background:#5f6368"></div>
<div class="a" style="left:231px;top:564px;width:4px;height:1px;background:#5f6368"></div>
<div class="a" style="left:231px;top:579px;width:4px;height:1px;background:#5f6368"></div>
<div class="a" style="left:231px;top:594px;width:4px;height:1px;background:#5f6368"></div>
<div class="a" style="left:231px;top:609px;width:4px;height:1px;background:#5f6368"></div>
<div class="a" style="left:231px;top:624px;width:4px;height:1px;background:#5f6368"></div>
<div class="a" style="left:231px;top:639px;width:4px;height:1px;background:#5f6368"></div>
<div class="a" style="left:231px;top:654px;width:4px;height:1px;background:#5f6368"></div>
<div class="a" style="left:227px;top:669px;width:8px;height:1px;background:#5f6368"></div>
<div class="a" style="left:231px;top:684px;width:4px;height:1px;background:#5f6368"></div>
<div class="a" style="left:231px;top:699px;width:4px;height:1px;background:#5f6368"></div>
<div class="a" style="left:231px;top:714px;width:4px;height:1px;background:#5f6368"></div>
<div class="a" style="left:231px;top:730px;width:4px;height:1px;background:#5f6368"></div>
<div class="a" style="left:231px;top:745px;width:4px;height:1px;background:#5f6368"></div>
<div class="a" style="left:231px;top:760px;width:4px;height:1px;background:#5f6368"></div>
<div class="a" style="left:231px;top:775px;width:4px;height:1px;background:#5f6368"></div>
<div class="a" style="left:227px;top:790px;width:8px;height:1px;background:#5f6368"></div>
<div class="a" style="left:231px;top:805px;width:4px;height:1px;background:#5f6368"></div>
<div class="a" style="left:231px;top:820px;width:4px;height:1px;background:#5f6368"></div>
<div class="a" style="left:231px;top:835px;width:4px;height:1px;background:#5f6368"></div>
<div class="a" style="left:219px;top:361px;width:14px;height:14px;font-size:11.5px;color:#202124;text-align:center;line-height:14px;-webkit-text-stroke:0.2px #202124;transform:rotate(-90deg)">1</div>
<div class="a" style="left:219px;top:481px;width:14px;height:14px;font-size:11.5px;color:#202124;text-align:center;line-height:14px;-webkit-text-stroke:0.2px #202124;transform:rotate(-90deg)">2</div>
<div class="a" style="left:219px;top:602px;width:14px;height:14px;font-size:11.5px;color:#202124;text-align:center;line-height:14px;-webkit-text-stroke:0.2px #202124;transform:rotate(-90deg)">3</div>
<div class="a" style="left:219px;top:723px;width:14px;height:14px;font-size:11.5px;color:#202124;text-align:center;line-height:14px;-webkit-text-stroke:0.2px #202124;transform:rotate(-90deg)">4</div>
<div class="a" style="left:206px;top:366px;width:9px;height:412px;background:#d4d6da;border-radius:5px"></div>
<div class="a" style="left:429px;top:143px;width:1220px;height:694px;background:#939396"></div>
<div class="a" style="left:437px;top:151px;width:1204px;height:678px;background:#fcf3ee"></div>
<div class="a" style="left:437px;top:151px;width:1204px;height:3px;background:#dedcdc"></div>
<div class="a" style="left:597px;top:151px;width:1px;height:678px;background:#9d9692"></div>
<div class="a" style="left:1346px;top:151px;width:1px;height:678px;background:#9d9692"></div>
<div class="a" style="left:437px;top:235px;width:1204px;height:1px;background:#aaa29d"></div>
<div class="a" style="left:1034px;top:146px;width:2px;height:2px;background:#3f4a4e"></div>
<div class="a" style="left:1034px;top:832px;width:2px;height:2px;background:#3f4a4e"></div>
<div class="a" style="left:1038px;top:146px;width:2px;height:2px;background:#3f4a4e"></div>
<div class="a" style="left:1038px;top:832px;width:2px;height:2px;background:#3f4a4e"></div>
<div class="a" style="left:1042px;top:146px;width:2px;height:2px;background:#3f4a4e"></div>
<div class="a" style="left:1042px;top:832px;width:2px;height:2px;background:#3f4a4e"></div>
<div class="a" style="left:432px;top:485px;width:2px;height:2px;background:#5a5f62"></div>
<div class="a" style="left:1644px;top:485px;width:2px;height:2px;background:#5a5f62"></div>
<div class="a" style="left:432px;top:489px;width:2px;height:2px;background:#5a5f62"></div>
<div class="a" style="left:1644px;top:489px;width:2px;height:2px;background:#5a5f62"></div>
<div class="a" style="left:432px;top:493px;width:2px;height:2px;background:#5a5f62"></div>
<div class="a" style="left:1644px;top:493px;width:2px;height:2px;background:#5a5f62"></div>
<div class="a" style="left:1007px;top:849px;width:46px;height:1px;background:#5f6368"></div></div><!--bdend-->
<div id="sd"><div class="a sl" style="left:669.5px;top:248.4px;font-size:16.4px;line-height:20.5px;letter-spacing:0.440px;font-weight:normal">Cultural competency related trainings:&nbsp; a training can be one and done, but the</div>
<div class="a sl" style="left:669.5px;top:268.4px;font-size:16.4px;line-height:20.5px;letter-spacing:0.309px;font-weight:normal">relationships are key</div>
<div class="a sl" style="left:669.5px;top:288.4px;font-size:16.4px;line-height:20.5px;letter-spacing:0.414px;font-weight:normal">Engaging with Tribes personally (highly critical): establish relationships, change</div>
<div class="a sl" style="left:669.5px;top:308.4px;font-size:16.4px;line-height:20.5px;letter-spacing:0.295px;font-weight:normal">happens here</div>
<div class="a sl" style="left:669.5px;top:328.4px;font-size:16.4px;line-height:20.5px;letter-spacing:0.490px;font-weight:normal">App or educational game for ICWA: develop scenarios common in courtrooms or</div>
<div class="a sl" style="left:669.5px;top:348.4px;font-size:16.4px;line-height:20.5px;letter-spacing:0.423px;font-weight:normal">discussions for helping learning sequences <svg style='display:inline-block;vertical-align:middle;position:relative;top:-1px' width='15' height='10' viewBox='0 0 15 10'><path d='M1 5h9' stroke='#1d1b1a' stroke-width='1.8'/><path d='M9 1.5l5 3.5-5 3.5z' fill='#1d1b1a'/></svg> more accessible learning to</div>
<div class="a sl" style="left:669.5px;top:368.4px;font-size:16.4px;line-height:20.5px;letter-spacing:0.399px;font-weight:normal">practitioners and Tribal leaders</div>
<div class="a sl" style="left:669.5px;top:388.4px;font-size:16.4px;line-height:20.5px;letter-spacing:0.401px;font-weight:normal">Tribal Family Finding: resources for those families to be able to care for child;&nbsp; if can&rsquo;t</div>
<div class="a sl" style="left:669.5px;top:411.4px;font-size:16.4px;line-height:20.5px;letter-spacing:0.533px;font-weight:normal">be with family, make sure connected to tribe</div>
<div class="a sl" style="left:669.5px;top:434.8px;font-size:16.4px;line-height:20.5px;letter-spacing:0.485px;font-weight:normal">Must be aware moral inferences (which lead to biases)--&gt; compassion as counter to</div>
<div class="a sl" style="left:669.5px;top:458.3px;font-size:16.4px;line-height:20.5px;letter-spacing:0.424px;font-weight:normal">biases: deep listening to oneself and others, considering how you view other in the</div>
<div class="a sl" style="left:669.5px;top:481.1px;font-size:16.4px;line-height:20.5px;letter-spacing:0.582px;font-weight:normal">world</div>
<div class="a sl" style="left:669.5px;top:504.6px;font-size:16.4px;line-height:20.5px;letter-spacing:0.391px;font-weight:normal">Must be willing ensure/nourish extended family connections, e.g. grandparents,</div>
<div class="a sl" style="left:669.5px;top:527.5px;font-size:16.4px;line-height:20.5px;letter-spacing:0.283px;font-weight:normal">cousins, etc.</div>
<div class="a sl" style="left:669.5px;top:550.4px;font-size:16.4px;line-height:20.5px;letter-spacing:0.406px;font-weight:normal">Must develop pathways for families to learn/connect to language, values, ceremony,</div>
<div class="a sl" style="left:669.5px;top:573.2px;font-size:16.4px;line-height:20.5px;letter-spacing:0.477px;font-weight:normal">crafts.</div>
<div class="a sl" style="left:1418.3px;top:248.9px;font-size:16.4px;line-height:20.5px;letter-spacing:0.361px;font-weight:normal">Mindset: do not assume</div>
<div class="a sl" style="left:1418.3px;top:268.9px;font-size:16.4px;line-height:20.5px;letter-spacing:0.330px;font-weight:normal">Native events are only for</div>
<div class="a sl" style="left:1418.3px;top:288.9px;font-size:16.4px;line-height:20.5px;letter-spacing:0.418px;font-weight:normal">Native people;&nbsp; rather, this</div>
<div class="a sl" style="left:1418.3px;top:308.7px;font-size:16.4px;line-height:20.5px;letter-spacing:0.469px;font-weight:normal">can be a point of</div>
<div class="a sl" style="left:1418.3px;top:328.4px;font-size:16.4px;line-height:20.5px;letter-spacing:0.551px;font-weight:normal">connection, grow point,</div>
<div class="a sl" style="left:1418.3px;top:348.5px;font-size:16.4px;line-height:20.5px;letter-spacing:0.448px;font-weight:normal">change in perception,</div>
<div class="a sl" style="left:1418.3px;top:368.4px;font-size:16.4px;line-height:20.5px;letter-spacing:0.401px;font-weight:normal">learning, resource building</div>
<div class="a sl" style="left:1418.3px;top:388.4px;font-size:16.4px;line-height:20.5px;letter-spacing:0.438px;font-weight:normal">Must not think of culture as</div>
<div class="a sl" style="left:1418.3px;top:408.2px;font-size:16.4px;line-height:20.5px;letter-spacing:0.508px;font-weight:normal">a monolith</div>
<div class="a sl" style="left:1418.3px;top:428.4px;font-size:16.4px;line-height:20.5px;letter-spacing:0.565px;font-weight:normal">We must not forget that</div>
<div class="a sl" style="left:1418.3px;top:448.6px;font-size:16.4px;line-height:20.5px;letter-spacing:0.513px;font-weight:normal">connection to culture is in</div>
<div class="a sl" style="left:1418.3px;top:469.0px;font-size:16.4px;line-height:20.5px;letter-spacing:0.415px;font-weight:normal">a child&rsquo;s best interests</div>
<div class="a" style="left:631px;top:255.5px;width:7px;height:7px;border-radius:50%;background:#141212"></div>
<div class="a" style="left:631px;top:295.5px;width:7px;height:7px;border-radius:50%;background:#141212"></div>
<div class="a" style="left:631px;top:335.5px;width:7px;height:7px;border-radius:50%;background:#141212"></div>
<div class="a" style="left:631px;top:395.5px;width:7px;height:7px;border-radius:50%;background:#141212"></div>
<div class="a" style="left:631px;top:441.9px;width:7px;height:7px;border-radius:50%;background:#141212"></div>
<div class="a" style="left:631px;top:511.7px;width:7px;height:7px;border-radius:50%;background:#141212"></div>
<div class="a" style="left:631px;top:557.5px;width:7px;height:7px;border-radius:50%;background:#141212"></div>
<div class="a" style="left:1380px;top:256.0px;width:7px;height:7px;border-radius:50%;background:#141212"></div>
<div class="a" style="left:1380px;top:395.5px;width:7px;height:7px;border-radius:50%;background:#141212"></div>
<div class="a" style="left:1380px;top:435.5px;width:7px;height:7px;border-radius:50%;background:#141212"></div>
<div class="a sl" style="left:449.5px;top:249.4px;font-size:21.3px;line-height:26.625px;letter-spacing:0.677px;font-weight:bold">Strengthen</div>
<div class="a sl" style="left:449.5px;top:277.4px;font-size:21.3px;line-height:26.625px;letter-spacing:0.297px;font-weight:bold">cultural</div>
<div class="a sl" style="left:449.5px;top:305.2px;font-size:21.3px;line-height:26.625px;letter-spacing:0.506px;font-weight:bold">connections</div>
<div class="a sl" style="left:449.5px;top:333.9px;font-size:21.3px;line-height:26.625px;letter-spacing:0.531px;font-weight:bold">for children</div>
<div class="a sl" style="left:880.6px;top:165.2px;font-size:22px;line-height:27.5px;letter-spacing:0.329px;font-weight:bold">Must Dos</div>
<div class="a sl" style="left:990px;top:165.2px;font-size:22px;line-height:27.5px;letter-spacing:2.219px;font-weight:normal">(4 - 6)</div>
<div class="a sl" style="left:1378px;top:165.2px;font-size:22px;line-height:27.5px;letter-spacing:0.549px;font-weight:bold">Must NOT Dos</div>
<div class="a sl" style="left:1543px;top:165.2px;font-size:22px;line-height:27.5px;letter-spacing:2.587px;font-weight:normal">(2 -3)</div>
<div class="a" style="left:718px;top:572px;width:2px;height:21px;background:#7a3b25"></div>
<div class="a" style="left:719px;top:572px;width:8px;height:9px;background:#8a4a30;border-radius:0 4px 4px 0"></div>
<svg class="a" style="left:926px;top:353px" width="12" height="18" viewBox="0 0 12 18"><path d="M1 1v14l3.5-3.5 2.5 5.5 2-1-2.5-5.2H11z" fill="#111" stroke="#fff" stroke-width="1"/></svg></div><!--sdend-->
<div id="pn"><div class="a" style="left:0;top:106px;width:225px;height:758px;overflow:hidden">
<div class="a" style="left:42px;top:4px;width:153px;height:76px;border:1px solid #dadce0;border-radius:11px;background:#fff"></div>
<div class="a" style="left:46px;top:8px;width:146px;height:68px;border-radius:8px;overflow:hidden;background:#e2e1dd"></div>
<div class="a" style="left:69px;top:8px;width:100px;height:68px;background:#fdfdfc"></div>
<div class="a" style="left:88px;top:9px;width:34px;height:48px;background:linear-gradient(160deg,#3a3a3a 0%,#151515 45%,#0e0e0e)"></div>
<div class="a" style="left:129px;top:43.0px;width:22px;height:1px;background:#c4c4c4"></div>
<div class="a" style="left:129px;top:45.30000000000001px;width:22px;height:1px;background:#c4c4c4"></div>
<div class="a" style="left:129px;top:47.60000000000002px;width:22px;height:1px;background:#c4c4c4"></div>
<div class="a" style="left:129px;top:49.89999999999998px;width:22px;height:1px;background:#c4c4c4"></div>
<div class="a" style="left:129px;top:52.19999999999999px;width:22px;height:1px;background:#c4c4c4"></div>
<div class="a" style="left:129px;top:54.5px;width:22px;height:1px;background:#c4c4c4"></div>
<div class="a" style="left:88px;top:65px;width:64px;height:1px;background:#d6d6d6"></div>
<div class="a" style="left:14px;top:96px;font-size:14px;color:#1f1f1f;width:18px;text-align:right;-webkit-text-stroke:0.3px #1f1f1f">6</div>
<div class="a" style="left:14px;top:198px;font-size:14px;color:#1f1f1f;width:18px;text-align:right;-webkit-text-stroke:0.3px #1f1f1f">7</div>
<div class="a" style="left:14px;top:300px;font-size:14px;color:#1f1f1f;width:18px;text-align:right;-webkit-text-stroke:0.3px #1f1f1f">8</div>
<div class="a" style="left:14px;top:401px;font-size:14px;color:#1f1f1f;width:18px;text-align:right;-webkit-text-stroke:0.3px #1f1f1f">9</div>
<div class="a" style="left:14px;top:503px;font-size:14px;color:#1f1f1f;width:18px;text-align:right;-webkit-text-stroke:0.3px #1f1f1f">10</div>
<div class="a" style="left:14px;top:605px;font-size:14px;color:#1f1f1f;width:18px;text-align:right;-webkit-text-stroke:0.3px #1f1f1f">11</div>
<div class="a" style="left:14px;top:707px;font-size:14px;color:#1f1f1f;width:18px;text-align:right;-webkit-text-stroke:0.3px #1f1f1f">12</div>
<div class="a" style="left:42px;top:93px;width:153px;height:88px;border:1px solid #dadce0;border-radius:11px;background:#fff"></div>
<div class="a" style="left:46px;top:97px;width:146px;height:80px;border-radius:8px;overflow:hidden;background:#808c6e"></div>
<div class="a" style="left:48px;top:119px;width:26px;height:1px;background:#66724f"></div>
<div class="a" style="left:48px;top:126px;width:24px;height:3px;background:#5c6848;opacity:.75"></div>
<div class="a" style="left:48px;top:135.0px;width:26px;height:1px;background:#5f6b4b"></div>
<div class="a" style="left:48px;top:137.60000000000002px;width:26px;height:1px;background:#5f6b4b"></div>
<div class="a" style="left:48px;top:140.2px;width:26px;height:1px;background:#5f6b4b"></div>
<div class="a" style="left:48px;top:142.8px;width:26px;height:1px;background:#5f6b4b"></div>
<div class="a" style="left:76px;top:119px;width:24px;height:1px;background:#66724f"></div>
<div class="a" style="left:76px;top:126px;width:22px;height:3px;background:#5c6848;opacity:.75"></div>
<div class="a" style="left:76px;top:135.0px;width:24px;height:1px;background:#5f6b4b"></div>
<div class="a" style="left:76px;top:137.60000000000002px;width:24px;height:1px;background:#5f6b4b"></div>
<div class="a" style="left:76px;top:140.2px;width:24px;height:1px;background:#5f6b4b"></div>
<div class="a" style="left:76px;top:142.8px;width:24px;height:1px;background:#5f6b4b"></div>
<div class="a" style="left:106px;top:119px;width:26px;height:1px;background:#66724f"></div>
<div class="a" style="left:106px;top:126px;width:24px;height:3px;background:#5c6848;opacity:.75"></div>
<div class="a" style="left:106px;top:135.0px;width:26px;height:1px;background:#5f6b4b"></div>
<div class="a" style="left:106px;top:137.60000000000002px;width:26px;height:1px;background:#5f6b4b"></div>
<div class="a" style="left:106px;top:140.2px;width:26px;height:1px;background:#5f6b4b"></div>
<div class="a" style="left:106px;top:142.8px;width:26px;height:1px;background:#5f6b4b"></div>
<div class="a" style="left:137px;top:119px;width:26px;height:1px;background:#66724f"></div>
<div class="a" style="left:137px;top:126px;width:24px;height:3px;background:#5c6848;opacity:.75"></div>
<div class="a" style="left:137px;top:135.0px;width:26px;height:1px;background:#5f6b4b"></div>
<div class="a" style="left:137px;top:137.60000000000002px;width:26px;height:1px;background:#5f6b4b"></div>
<div class="a" style="left:137px;top:140.2px;width:26px;height:1px;background:#5f6b4b"></div>
<div class="a" style="left:137px;top:142.8px;width:26px;height:1px;background:#5f6b4b"></div>
<div class="a" style="left:165px;top:119px;width:24px;height:1px;background:#66724f"></div>
<div class="a" style="left:165px;top:126px;width:22px;height:3px;background:#5c6848;opacity:.75"></div>
<div class="a" style="left:165px;top:135.0px;width:24px;height:1px;background:#5f6b4b"></div>
<div class="a" style="left:165px;top:137.60000000000002px;width:24px;height:1px;background:#5f6b4b"></div>
<div class="a" style="left:165px;top:140.2px;width:24px;height:1px;background:#5f6b4b"></div>
<div class="a" style="left:165px;top:142.8px;width:24px;height:1px;background:#5f6b4b"></div>
<div class="a" style="left:106px;top:147px;width:20px;height:1px;background:#5f6b4b"></div>
<div class="a" style="left:106px;top:152px;width:20px;height:1px;background:#5f6b4b"></div>
<div class="a" style="left:76px;top:146px;width:18px;height:1px;background:#5f6b4b"></div>
<div class="a" style="left:42px;top:194px;width:153px;height:88px;border:1px solid #dadce0;border-radius:11px;background:#fff"></div>
<div class="a" style="left:46px;top:198px;width:146px;height:80px;border-radius:8px;overflow:hidden;background:#dddcd4"></div>
<svg class="a" style="left:46px;top:198px;clip-path:inset(0 round 0 0 8px 8px)" width="146" height="80" viewBox="0 0 146 80"><defs><linearGradient id="m7" gradientUnits="userSpaceOnUse" x1="0" y1="48" x2="0" y2="80"><stop offset="0" stop-color="#a3acad"/><stop offset=".35" stop-color="#6f7c7e"/><stop offset=".7" stop-color="#3b474a"/><stop offset="1" stop-color="#252c2b"/></linearGradient></defs><path d="M0 57 L10 55 L22 56 L34 52 L46 54 L56 51 L66 53 L74 49 L84 50 L94 48 L104 52 L116 49 L128 51 L138 50 L146 52 V80 H0Z" fill="url(#m7)"/><path d="M110 80 Q130 72 146 70 V80Z" fill="#8a7a5e" opacity=".6"/></svg>
<div class="a" style="left:50px;top:206px;width:58px;height:1px;background:#7a7a72"></div>
<div class="a" style="left:54px;top:210px;width:64px;height:1px;background:#b9b7ae"></div>
<div class="a" style="left:54px;top:213px;width:64px;height:1px;background:#b9b7ae"></div>
<div class="a" style="left:54px;top:216px;width:64px;height:1px;background:#b9b7ae"></div>
<div class="a" style="left:54px;top:219px;width:64px;height:1px;background:#b9b7ae"></div>
<div class="a" style="left:54px;top:222px;width:64px;height:1px;background:#b9b7ae"></div>
<div class="a" style="left:122px;top:206px;width:60px;height:1px;background:#7a7a72"></div>
<div class="a" style="left:128px;top:210px;width:60px;height:1px;background:#b9b7ae"></div>
<div class="a" style="left:128px;top:213px;width:60px;height:1px;background:#b9b7ae"></div>
<div class="a" style="left:128px;top:216px;width:60px;height:1px;background:#b9b7ae"></div>
<div class="a" style="left:128px;top:219px;width:60px;height:1px;background:#b9b7ae"></div>
<div class="a" style="left:128px;top:222px;width:60px;height:1px;background:#b9b7ae"></div>
<div class="a" style="left:128px;top:225px;width:60px;height:1px;background:#b9b7ae"></div>
<div class="a" style="left:128px;top:228px;width:60px;height:1px;background:#b9b7ae"></div>
<div class="a" style="left:128px;top:231px;width:60px;height:1px;background:#b9b7ae"></div>
<div class="a" style="left:119px;top:202px;width:1px;height:44px;background:#9a9a94"></div>
<div class="a" style="left:42px;top:298px;width:153px;height:86px;border:1px solid #dadce0;border-radius:11px;background:#fff"></div>
<div class="a" style="left:46px;top:302px;width:146px;height:78px;border-radius:8px;overflow:hidden;background:linear-gradient(#b5c6d6 0%,#cfd3d6 28%,#e3d9cc 45%,#ead8c0 55%)"></div>
<svg class="a" style="left:46px;top:302px" width="146" height="78" viewBox="0 0 146 78"><defs><radialGradient id="sun8" cx="0.22" cy="0.62" r="0.35"><stop offset="0" stop-color="#fff1d0"/><stop offset=".5" stop-color="#f3cf9a" stop-opacity=".7"/><stop offset="1" stop-color="#e8c090" stop-opacity="0"/></radialGradient><linearGradient id="h8" x1="0" y1="0" x2="0" y2="1"><stop offset="0" stop-color="#9a7658"/><stop offset=".5" stop-color="#6a523e"/><stop offset="1" stop-color="#4a3a2c"/></linearGradient></defs><rect width="146" height="78" fill="url(#sun8)"/><path d="M0 50 Q20 44 40 46 T80 44 Q100 40 120 42 T146 44 V78 H0Z" fill="url(#h8)"/><radialGradient id="g8" cx="0.5" cy="0.5" r="0.5"><stop offset="0" stop-color="#ffe6b8" stop-opacity=".85"/><stop offset="1" stop-color="#f0b878" stop-opacity="0"/></radialGradient><ellipse cx="24" cy="47" rx="26" ry="14" fill="url(#g8)"/></svg>
<div class="a" style="left:54px;top:309px;width:18px;height:1px;background:#6a6a6a"></div>
<div class="a" style="left:62px;top:314.0px;width:50px;height:1px;background:#8e8e8e"></div>
<div class="a" style="left:62px;top:316.79999999999995px;width:50px;height:1px;background:#8e8e8e"></div>
<div class="a" style="left:62px;top:319.6px;width:50px;height:1px;background:#8e8e8e"></div>
<div class="a" style="left:62px;top:322.4px;width:50px;height:1px;background:#8e8e8e"></div>
<div class="a" style="left:62px;top:325.20000000000005px;width:50px;height:1px;background:#8e8e8e"></div>
<div class="a" style="left:62px;top:328.0px;width:50px;height:1px;background:#8e8e8e"></div>
<div class="a" style="left:62px;top:330.79999999999995px;width:50px;height:1px;background:#8e8e8e"></div>
<div class="a" style="left:120px;top:307px;width:22px;height:1px;background:#6a6a6a"></div>
<div class="a" style="left:128px;top:312.0px;width:56px;height:1px;background:#8e8e8e"></div>
<div class="a" style="left:128px;top:314.79999999999995px;width:56px;height:1px;background:#8e8e8e"></div>
<div class="a" style="left:128px;top:317.6px;width:56px;height:1px;background:#8e8e8e"></div>
<div class="a" style="left:128px;top:320.4px;width:56px;height:1px;background:#8e8e8e"></div>
<div class="a" style="left:128px;top:323.20000000000005px;width:56px;height:1px;background:#8e8e8e"></div>
<div class="a" style="left:128px;top:326.0px;width:56px;height:1px;background:#8e8e8e"></div>
<div class="a" style="left:128px;top:328.79999999999995px;width:56px;height:1px;background:#8e8e8e"></div>
<div class="a" style="left:128px;top:331.6px;width:56px;height:1px;background:#8e8e8e"></div>
<div class="a" style="left:41px;top:398px;width:156px;height:91px;border:3px solid #1d4fa3;border-radius:12px;background:#fff"></div>
<div class="a" style="left:46px;top:402px;width:146px;height:83px;border-radius:8px;overflow:hidden;background:#fbf2ed"></div>
<div class="a" style="left:100px;top:404px;width:22px;height:2px;background:#a8a09c"></div>
<div class="a" style="left:160px;top:404px;width:28px;height:2px;background:#a8a09c"></div>
<div class="a" style="left:48px;top:414px;width:16px;height:1px;background:#9a938f"></div>
<div class="a" style="left:48px;top:418px;width:16px;height:1px;background:#9a938f"></div>
<div class="a" style="left:48px;top:422px;width:16px;height:1px;background:#9a938f"></div>
<div class="a" style="left:48px;top:426px;width:16px;height:1px;background:#9a938f"></div>
<div class="a" style="left:64px;top:410px;width:1px;height:76px;background:#efe6e1"></div>
<div class="a" style="left:153px;top:410px;width:1px;height:76px;background:#efe6e1"></div>
<div class="a" style="left:73px;top:415.0px;width:78px;height:1px;background:#d2cbc7"></div>
<div class="a" style="left:73px;top:417.5px;width:78px;height:1px;background:#d2cbc7"></div>
<div class="a" style="left:73px;top:420.0px;width:78px;height:1px;background:#d2cbc7"></div>
<div class="a" style="left:73px;top:422.5px;width:78px;height:1px;background:#d2cbc7"></div>
<div class="a" style="left:73px;top:425.0px;width:78px;height:1px;background:#d2cbc7"></div>
<div class="a" style="left:73px;top:427.5px;width:78px;height:1px;background:#d2cbc7"></div>
<div class="a" style="left:73px;top:430.0px;width:78px;height:1px;background:#d2cbc7"></div>
<div class="a" style="left:73px;top:432.5px;width:78px;height:1px;background:#d2cbc7"></div>
<div class="a" style="left:73px;top:435.0px;width:78px;height:1px;background:#d2cbc7"></div>
<div class="a" style="left:73px;top:437.5px;width:78px;height:1px;background:#d2cbc7"></div>
<div class="a" style="left:73px;top:440.0px;width:78px;height:1px;background:#d2cbc7"></div>
<div class="a" style="left:73px;top:442.5px;width:78px;height:1px;background:#d2cbc7"></div>
<div class="a" style="left:73px;top:445.0px;width:78px;height:1px;background:#d2cbc7"></div>
<div class="a" style="left:73px;top:447.5px;width:78px;height:1px;background:#d2cbc7"></div>
<div class="a" style="left:73px;top:450.0px;width:78px;height:1px;background:#d2cbc7"></div>
<div class="a" style="left:73px;top:452.5px;width:78px;height:1px;background:#d2cbc7"></div>
<div class="a" style="left:69px;top:415px;width:2px;height:1px;background:#b0a8a4"></div>
<div class="a" style="left:69px;top:420px;width:2px;height:1px;background:#b0a8a4"></div>
<div class="a" style="left:69px;top:425px;width:2px;height:1px;background:#b0a8a4"></div>
<div class="a" style="left:69px;top:430px;width:2px;height:1px;background:#b0a8a4"></div>
<div class="a" style="left:69px;top:435.5px;width:2px;height:1px;background:#b0a8a4"></div>
<div class="a" style="left:69px;top:443px;width:2px;height:1px;background:#b0a8a4"></div>
<div class="a" style="left:69px;top:448px;width:2px;height:1px;background:#b0a8a4"></div>
<div class="a" style="left:164px;top:415.0px;width:27px;height:1px;background:#d2cbc7"></div>
<div class="a" style="left:164px;top:417.6px;width:27px;height:1px;background:#d2cbc7"></div>
<div class="a" style="left:164px;top:420.20000000000005px;width:27px;height:1px;background:#d2cbc7"></div>
<div class="a" style="left:164px;top:422.79999999999995px;width:27px;height:1px;background:#d2cbc7"></div>
<div class="a" style="left:164px;top:425.4px;width:27px;height:1px;background:#d2cbc7"></div>
<div class="a" style="left:164px;top:428.0px;width:27px;height:1px;background:#d2cbc7"></div>
<div class="a" style="left:164px;top:430.6px;width:27px;height:1px;background:#d2cbc7"></div>
<div class="a" style="left:164px;top:433.20000000000005px;width:27px;height:1px;background:#d2cbc7"></div>
<div class="a" style="left:164px;top:435.79999999999995px;width:27px;height:1px;background:#d2cbc7"></div>
<div class="a" style="left:164px;top:438.4px;width:27px;height:1px;background:#d2cbc7"></div>
<div class="a" style="left:164px;top:441.0px;width:27px;height:1px;background:#d2cbc7"></div>
<div class="a" style="left:164px;top:443.6px;width:27px;height:1px;background:#d2cbc7"></div>
<div class="a" style="left:50px;top:478px;width:24px;height:8px;border-radius:12px 12px 0 0;background:#9a4d22"></div>
<div class="a" style="left:42px;top:500px;width:153px;height:90px;border:1px solid #dadce0;border-radius:11px;background:#fff"></div>
<div class="a" style="left:46px;top:504px;width:146px;height:82px;border-radius:8px;overflow:hidden;background:#fbf2ed"></div>
<div class="a" style="left:100px;top:506px;width:22px;height:2px;background:#a8a09c"></div>
<div class="a" style="left:160px;top:506px;width:28px;height:2px;background:#a8a09c"></div>
<div class="a" style="left:48px;top:517.0px;width:14px;height:1px;background:#9a938f"></div>
<div class="a" style="left:48px;top:520.6px;width:14px;height:1px;background:#9a938f"></div>
<div class="a" style="left:48px;top:524.2px;width:14px;height:1px;background:#9a938f"></div>
<div class="a" style="left:48px;top:527.8px;width:14px;height:1px;background:#9a938f"></div>
<div class="a" style="left:48px;top:531.4px;width:14px;height:1px;background:#9a938f"></div>
<div class="a" style="left:48px;top:535.0px;width:14px;height:1px;background:#9a938f"></div>
<div class="a" style="left:64px;top:512px;width:1px;height:76px;background:#efe6e1"></div>
<div class="a" style="left:153px;top:512px;width:1px;height:76px;background:#efe6e1"></div>
<div class="a" style="left:73px;top:517.0px;width:82px;height:1px;background:#d2cbc7"></div>
<div class="a" style="left:73px;top:519.6px;width:82px;height:1px;background:#d2cbc7"></div>
<div class="a" style="left:73px;top:522.2px;width:82px;height:1px;background:#d2cbc7"></div>
<div class="a" style="left:73px;top:524.8px;width:82px;height:1px;background:#d2cbc7"></div>
<div class="a" style="left:73px;top:527.4px;width:82px;height:1px;background:#d2cbc7"></div>
<div class="a" style="left:73px;top:530.0px;width:82px;height:1px;background:#d2cbc7"></div>
<div class="a" style="left:73px;top:532.6px;width:82px;height:1px;background:#d2cbc7"></div>
<div class="a" style="left:73px;top:535.2px;width:82px;height:1px;background:#d2cbc7"></div>
<div class="a" style="left:73px;top:537.8px;width:82px;height:1px;background:#d2cbc7"></div>
<div class="a" style="left:73px;top:540.4px;width:82px;height:1px;background:#d2cbc7"></div>
<div class="a" style="left:73px;top:543.0px;width:82px;height:1px;background:#d2cbc7"></div>
<div class="a" style="left:73px;top:545.6px;width:82px;height:1px;background:#d2cbc7"></div>
<div class="a" style="left:73px;top:548.2px;width:82px;height:1px;background:#d2cbc7"></div>
<div class="a" style="left:73px;top:550.8px;width:82px;height:1px;background:#d2cbc7"></div>
<div class="a" style="left:73px;top:553.4px;width:82px;height:1px;background:#d2cbc7"></div>
<div class="a" style="left:160px;top:517px;width:8px;height:1px;background:#b0a8a4"></div>
<div class="a" style="left:42px;top:602px;width:153px;height:89px;border:1px solid #dadce0;border-radius:11px;background:#fff"></div>
<div class="a" style="left:46px;top:606px;width:146px;height:81px;border-radius:8px;overflow:hidden;background:linear-gradient(#dccbc2 0%,#d5c3b8 60%)"></div>
<svg class="a" style="left:46px;top:606px" width="146" height="81" viewBox="0 0 146 81"><defs><linearGradient id="h11" x1="0" y1="0" x2="0" y2="1"><stop offset="0" stop-color="#8c5e4c"/><stop offset=".5" stop-color="#6a4234"/><stop offset="1" stop-color="#4c2e24"/></linearGradient></defs><path d="M0 56 Q14 52 28 54 T56 52 Q70 50 84 53 T110 50 Q126 48 146 52 V81 H0Z" fill="url(#h11)"/></svg>
<div class="a" style="left:58px;top:613px;width:20px;height:1px;background:#6a5a55"></div>
<div class="a" style="left:60px;top:622px;width:118px;height:1px;background:#9a8a85"></div>
<div class="a" style="left:76px;top:626px;width:30px;height:1px;background:#9a8a85"></div>
<div class="a" style="left:76px;top:630px;width:30px;height:1px;background:#9a8a85"></div>
<div class="a" style="left:76px;top:634px;width:30px;height:1px;background:#9a8a85"></div>
<div class="a" style="left:50px;top:681px;width:25px;height:8px;border-radius:12px 12px 0 0;background:#b0126f;border:2px solid #fff;border-bottom:0"></div>
<div class="a" style="left:42px;top:704px;width:153px;height:98px;border:1px solid #dadce0;border-radius:11px;background:#fff"></div>
<div class="a" style="left:46px;top:708px;width:146px;height:90px;border-radius:8px;overflow:hidden;background:#dedcd6"></div>
<div class="a" style="left:70px;top:712px;width:98px;height:60px;background:#fbfbfa"></div>
<div class="a" style="left:76px;top:721px;width:72px;height:36px;background:linear-gradient(170deg,#8a969a 0%,#6f7b7c 35%,#7a6a58 55%,#4a4038 100%)"></div>
<div class="a" style="left:151px;top:720px;width:12px;height:1px;background:#b0b0b0"></div>
<div class="a" style="left:151px;top:723px;width:12px;height:1px;background:#b0b0b0"></div>
<div class="a" style="left:151px;top:726px;width:12px;height:1px;background:#b0b0b0"></div>
<div class="a" style="left:151px;top:729px;width:12px;height:1px;background:#b0b0b0"></div>
<div class="a" style="left:151px;top:732px;width:12px;height:1px;background:#b0b0b0"></div>
<div class="a" style="left:151px;top:735px;width:12px;height:1px;background:#b0b0b0"></div>
<div class="a" style="left:151px;top:738px;width:12px;height:1px;background:#b0b0b0"></div>
<div class="a" style="left:151px;top:741px;width:12px;height:1px;background:#b0b0b0"></div>
<div class="a" style="left:151px;top:744px;width:12px;height:1px;background:#b0b0b0"></div>
<div class="a" style="left:151px;top:747px;width:12px;height:1px;background:#b0b0b0"></div>
</div>
<svg class="a" style="left:28px;top:891px" width="16" height="16" viewBox="0 0 16 16"><rect x="1" y="1" width="5.5" height="5.5" fill="none" stroke="#444746" stroke-width="1.6"/><rect x="9.5" y="1" width="5.5" height="5.5" fill="none" stroke="#444746" stroke-width="1.6"/><rect x="1" y="9.5" width="5.5" height="5.5" fill="none" stroke="#444746" stroke-width="1.6"/><rect x="9.5" y="9.5" width="5.5" height="5.5" fill="none" stroke="#444746" stroke-width="1.6"/></svg>
<svg class="a" style="left:79px;top:892px" width="10" height="14" viewBox="0 0 10 14"><path d="M8 1.5L2.5 7 8 12.5" fill="none" stroke="#444746" stroke-width="1.8"/></svg>
<div class="a" style="left:236px;top:871px;width:1588px;height:48px;background:#eef1fa;border-radius:2px"></div>
<div class="a" style="left:252px;top:884px;white-space:nowrap;font-size:14.6px;color:#1f1f1f">Click to add speaker notes</div>
<div class="a" style="left:1857px;top:429px;width:46px;height:184px;background:#f0f3f8;border-radius:23px"></div>
<svg class="a" style="left:1872.0px;top:446.0px" width="16" height="14" viewBox="0 0 16 14"><rect x="1" y="2" width="14" height="10" rx="1" fill="none" stroke="#444746" stroke-width="1.5"/><path d="M3.5 5.5h5M3.5 8.5h5" stroke="#444746" stroke-width="1.3"/><rect x="10" y="4.5" width="3" height="5" fill="#444746"/></svg>
<svg class="a" style="left:1872.0px;top:489.0px" width="16" height="16" viewBox="0 0 16 16"><rect x="4" y="1" width="11" height="11" rx="1" fill="none" stroke="#444746" stroke-width="1.5"/><path d="M1.5 4v10.5H12" fill="none" stroke="#444746" stroke-width="1.5"/><circle cx="9.5" cy="6.5" r="2.3" fill="none" stroke="#444746" stroke-width="1.4"/></svg>
<svg class="a" style="left:1872.0px;top:533.0px" width="16" height="16" viewBox="0 0 16 16"><path d="M9 1.5H1.5v13h13V8" fill="none" stroke="#444746" stroke-width="1.5"/><path d="M3.5 12l3-3.5 2 2 1.5-1.5 2.5 3z" fill="#444746"/><circle cx="11.5" cy="4" r="2.3" fill="none" stroke="#444746" stroke-width="1.4"/><path d="M13.2 5.7l2 2" stroke="#444746" stroke-width="1.4"/></svg>
<svg class="a" style="left:1872.0px;top:578.0px" width="16" height="14" viewBox="0 0 16 14"><path d="M1.5 2h5l1.5 1.5h6.5v9h-13z" fill="none" stroke="#444746" stroke-width="1.5" stroke-linejoin="round"/></svg>
<div class="a" style="left:1893px;top:890px;width:36px;height:36px;background:#fff;border-radius:50%;box-shadow:0 1px 3px rgba(0,0,0,.25)"></div>
<svg class="a" style="left:1904px;top:901px" width="8" height="12" viewBox="0 0 8 12"><path d="M6.5 1L1.5 6l5 5" fill="none" stroke="#444746" stroke-width="1.6"/></svg></div><!--pnend-->

</div>
</body></html>
